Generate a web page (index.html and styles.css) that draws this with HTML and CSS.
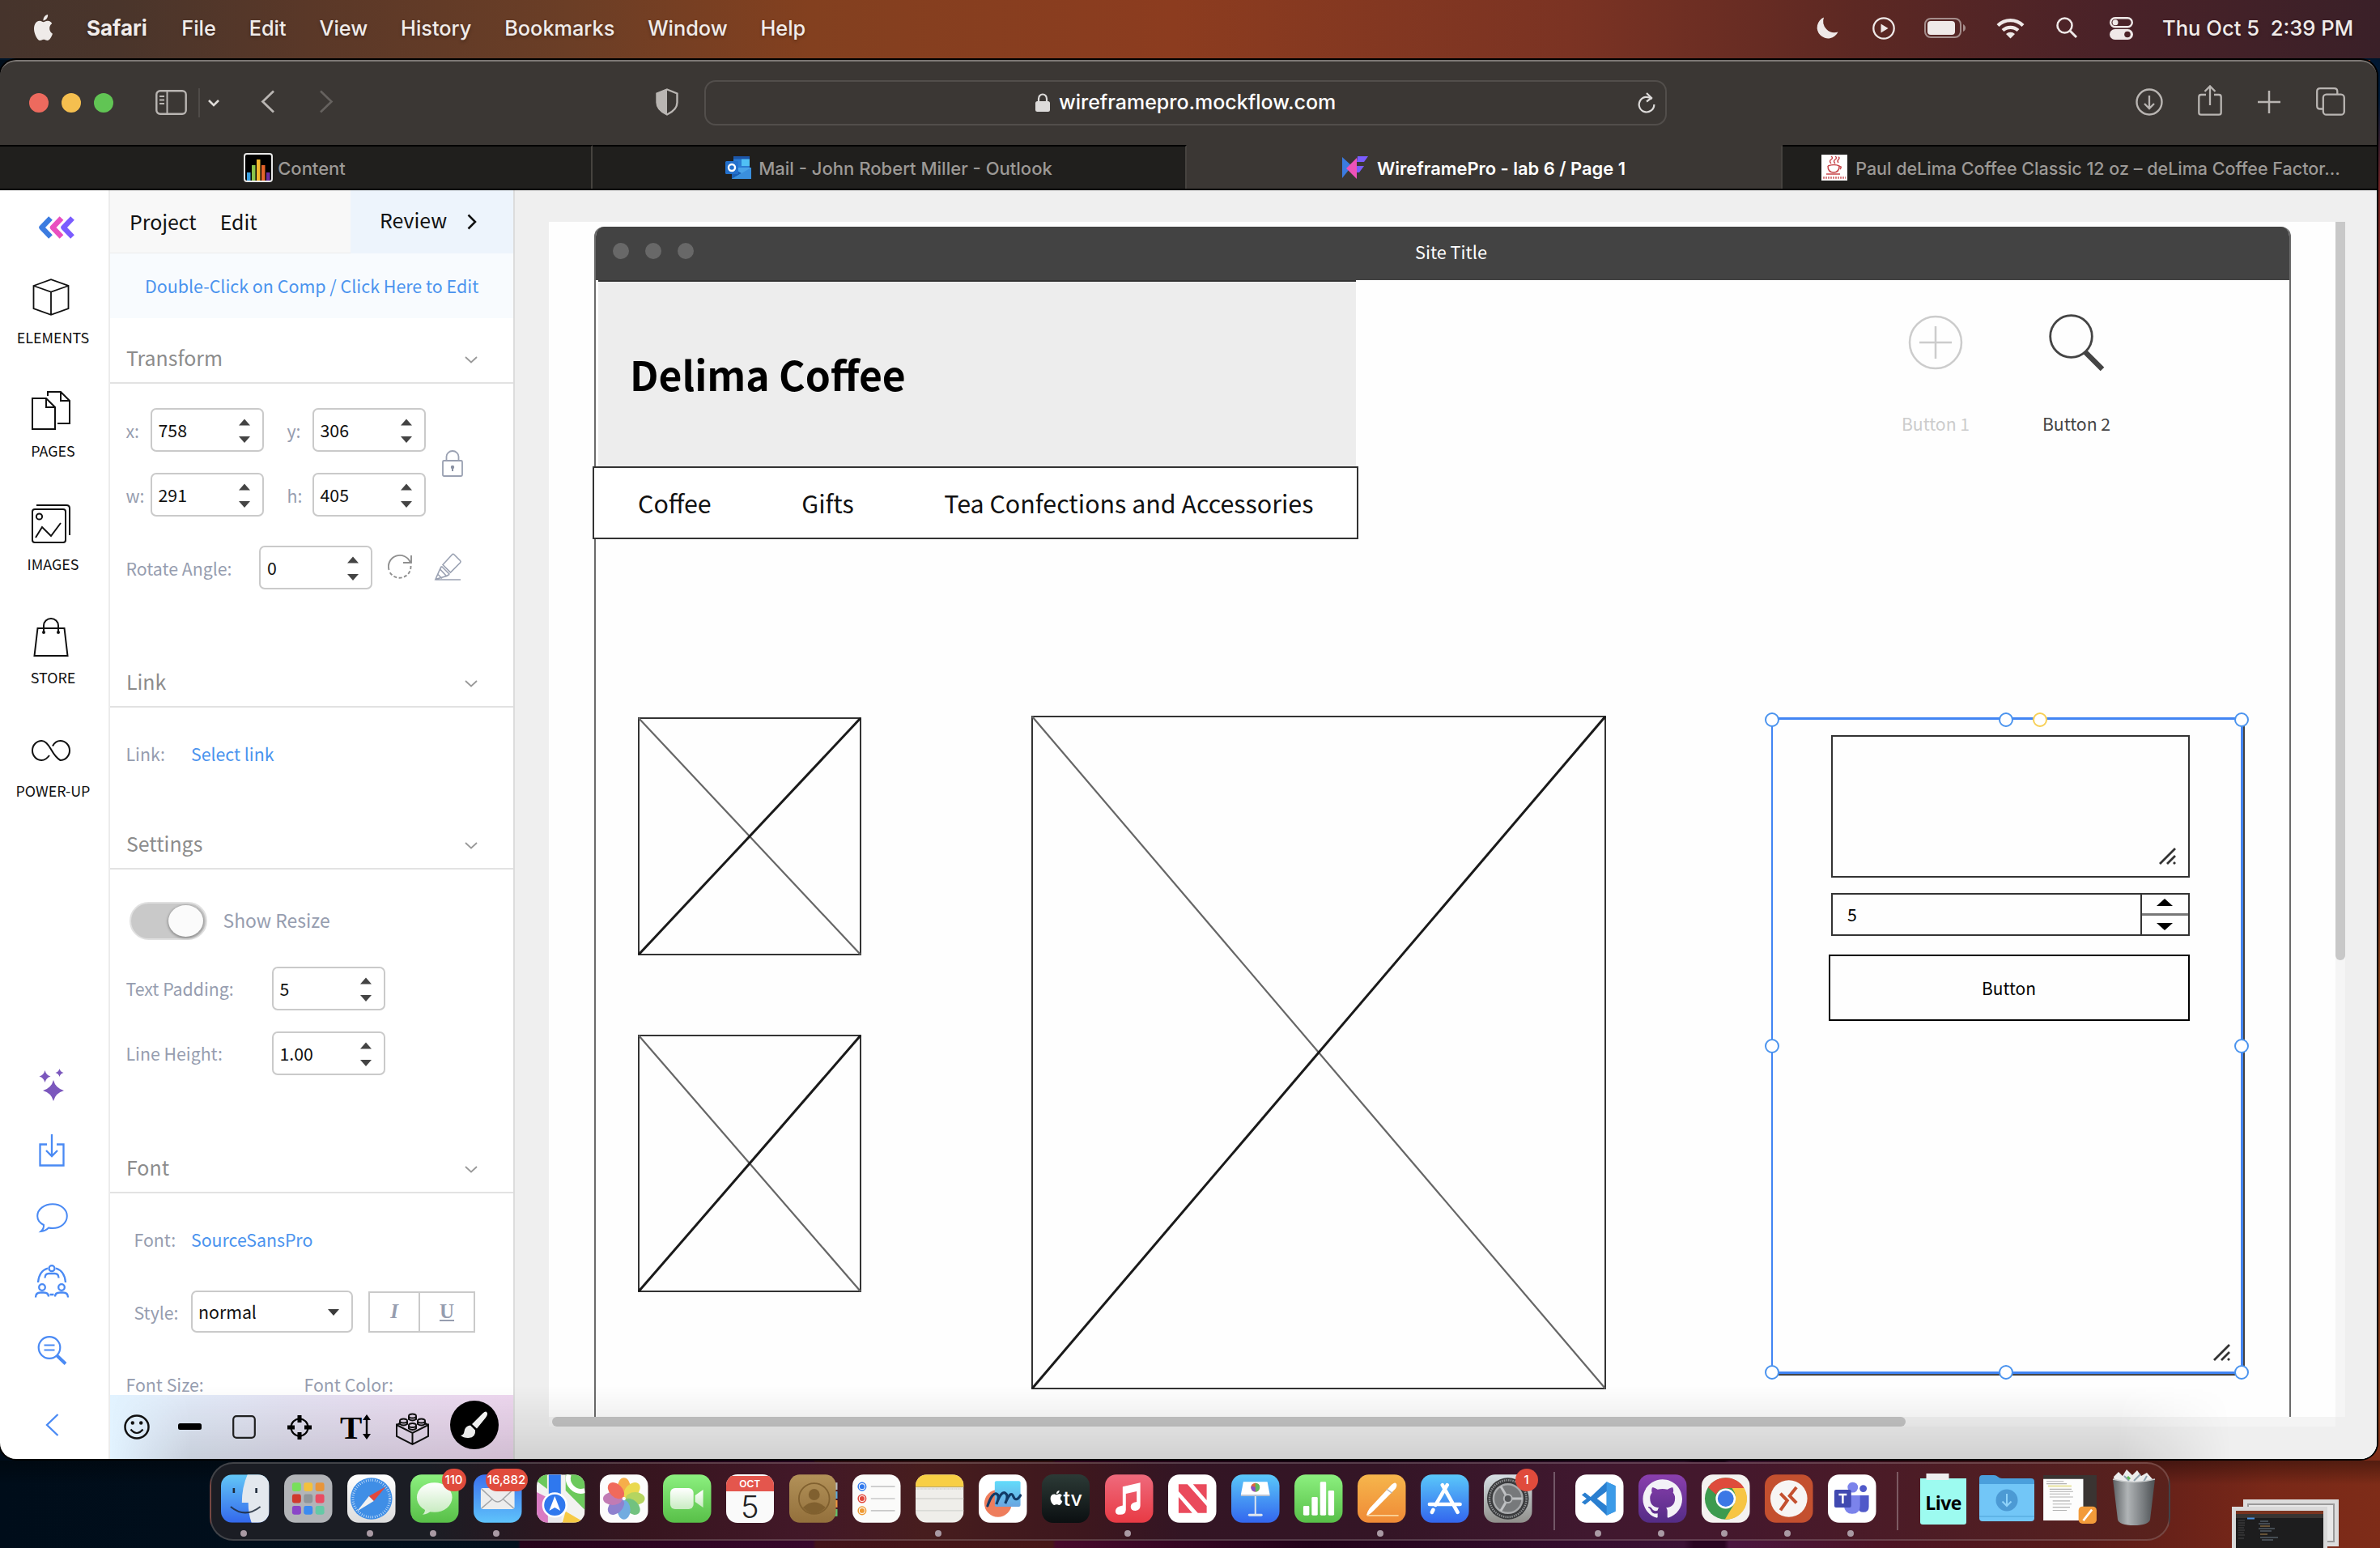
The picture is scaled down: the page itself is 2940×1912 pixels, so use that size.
FILE: index.html
```html
<!DOCTYPE html>
<html lang="en">
<head>
<meta charset="utf-8">
<title>WireframePro - lab 6 / Page 1</title>
<link rel="stylesheet" href="styles.css">
</head>
<body>
<svg class="defs" width="0" height="0">
  <defs>
    <linearGradient id="g-blue" x2="0" y2="1"><stop stop-color="#5ac8fa"/><stop offset="1" stop-color="#3366ee"/></linearGradient>
    <linearGradient id="g-mail" x2="0" y2="1"><stop stop-color="#3a70ee"/><stop offset="1" stop-color="#5fc3fb"/></linearGradient>
    <linearGradient id="g-green" x2="0" y2="1"><stop stop-color="#8cf07f"/><stop offset="1" stop-color="#58bf48"/></linearGradient>
    <linearGradient id="g-music" x2="0" y2="1"><stop stop-color="#ef6a7c"/><stop offset="1" stop-color="#e83a44"/></linearGradient>
    <linearGradient id="g-orange" x2="0" y2="1"><stop stop-color="#f6b64c"/><stop offset="1" stop-color="#ef8a36"/></linearGradient>
    <linearGradient id="g-white" x2="0" y2="1"><stop stop-color="#ffffff"/><stop offset="1" stop-color="#dcdcdc"/></linearGradient>
    <linearGradient id="g-bubble" x2="0" y2="1"><stop stop-color="#ffffff"/><stop offset="1" stop-color="#c9ecc2"/></linearGradient>
    <linearGradient id="g-silver" x2="0" y2="1"><stop stop-color="#d6dfe4"/><stop offset="1" stop-color="#908f8b"/></linearGradient>
    <linearGradient id="g-brown" x2="0" y2="1"><stop stop-color="#b29158"/><stop offset="1" stop-color="#93703c"/></linearGradient>
    <linearGradient id="g-purple" x2="0" y2="1"><stop stop-color="#8a3fae"/><stop offset="1" stop-color="#542c86"/></linearGradient>
    <linearGradient id="g-trash" x2="1" y2="0"><stop stop-color="#5d6164"/><stop offset=".35" stop-color="#b0b4b6"/><stop offset=".7" stop-color="#7c8083"/><stop offset="1" stop-color="#4c5053"/></linearGradient>
    <linearGradient id="g-finder" x2="0" y2="1"><stop stop-color="#63c7f7"/><stop offset="1" stop-color="#3368ec"/></linearGradient>
    <linearGradient id="g-cyan" x2="0" y2="1"><stop stop-color="#62dcfb"/><stop offset="1" stop-color="#6aa5e0"/></linearGradient>
    <clipPath id="sq"><rect width="60" height="60" rx="14"/></clipPath>
    <path id="apple" d="M12.152 6.896c-.948 0-2.415-1.078-3.96-1.04-2.04.027-3.91 1.183-4.961 3.014-2.117 3.675-.546 9.103 1.519 12.09 1.013 1.454 2.208 3.09 3.792 3.039 1.52-.065 2.09-.987 3.935-.987 1.831 0 2.35.987 3.96.948 1.637-.026 2.676-1.48 3.676-2.948 1.156-1.688 1.636-3.325 1.662-3.415-.039-.013-3.182-1.221-3.22-4.857-.026-3.04 2.48-4.494 2.597-4.559-1.429-2.09-3.623-2.324-4.39-2.376-2-.156-3.675 1.09-4.61 1.09zM15.53 3.83c.843-1.012 1.4-2.427 1.245-3.83-1.207.052-2.662.805-3.532 1.818-.78.896-1.454 2.338-1.273 3.714 1.338.104 2.715-.688 3.559-1.701"/>
    <symbol id="caret" viewBox="0 0 16 10"><path d="M1 1l7 6.500 7-6.500" fill="none" stroke="#999" stroke-width="1.800"/></symbol>
    <symbol id="spin" viewBox="0 0 14 30"><path d="M0 8.500L7 .500l7 8zM0 22l7 8 7-8z" fill="#444"/></symbol>
    <symbol id="grip" viewBox="0 0 21 21"><path d="M1 20L20 1M10 20l10-10M18 20l2-2" fill="none" stroke="#333" stroke-width="2.800"/></symbol>
  </defs>
</svg>

<header class="menubar">
  <svg class="apple" width="27" height="32" viewBox="0.5 0 23 24" preserveAspectRatio="none"><use href="#apple" fill="#efebe9"/></svg>
  <nav class="menus">
    <b>Safari</b><span>File</span><span>Edit</span><span>View</span><span>History</span><span>Bookmarks</span><span>Window</span><span>Help</span>
  </nav>
  <div class="status">
    <svg class="s-moon" width="28" height="28" viewBox="0 0 28 28"><path d="M10 .500a13.500 13.500 0 1 0 17.500 18A14 14 0 0 1 10 .500z" fill="#efe9e8"/></svg>
    <svg class="s-play" width="28" height="28" viewBox="0 0 28 28"><circle cx="14" cy="14" r="12.700" fill="none" stroke="#efe9e8" stroke-width="2.300"/><path d="M10.500 8.500v11l9-5.500z" fill="#efe9e8"/></svg>
    <svg class="s-batt" width="51" height="25" viewBox="0 0 51 25"><rect x="1" y="1" width="44" height="23" rx="7" fill="none" stroke="#a58e8c" stroke-width="2"/><rect x="4" y="4" width="34" height="17" rx="4" fill="#efe9e8"/><path d="M48 8q3 1.500 3 4.500t-3 4.500z" fill="#a58e8c"/></svg>
    <svg class="s-wifi" width="35" height="26" viewBox="0 0 35 26"><path d="M2 9.500a22 22 0 0 1 31 0M8 15.500a14 14 0 0 1 19 0" fill="none" stroke="#efe9e8" stroke-width="4.200"/><path d="M12 20a8 8 0 0 1 11 0l-5.500 5.500z" fill="#efe9e8"/></svg>
    <svg class="s-find" width="26" height="27" viewBox="0 0 26 27"><circle cx="10.500" cy="10.500" r="9" fill="none" stroke="#efe9e8" stroke-width="2.500"/><path d="M17 17l8 8" stroke="#efe9e8" stroke-width="3"/></svg>
    <svg class="s-ctl" width="29" height="28" viewBox="0 0 29 28"><rect x="1.200" y="1.200" width="26.600" height="11" rx="5.500" fill="none" stroke="#efe9e8" stroke-width="2.400"/><circle cx="7" cy="6.700" r="3.500" fill="#efe9e8"/><rect y="15" width="29" height="13" rx="6.500" fill="#efe9e8"/><circle cx="22" cy="21.500" r="3.800" fill="#4d2428"/></svg>
    <span class="clock">Thu Oct 5&nbsp; 2:39 PM</span>
  </div>
</header>

<div class="window">
  <div class="toolbar">
    <div class="lights"><i class="red"></i><i class="yellow"></i><i class="green"></i></div>
    <svg class="t-side" width="39" height="31" viewBox="0 0 39 31"><rect x="1.300" y="1.300" width="36.400" height="28.400" rx="4.500" fill="none" stroke="#b9b5b2" stroke-width="2.400"/><path d="M14.500 1v29M5 8h6M5 12.500h6M5 17h6" stroke="#b9b5b2" stroke-width="2"/></svg>
    <i class="t-div"></i>
    <svg class="t-down" width="16" height="10" viewBox="0 0 16 10"><path d="M2 2l6 6 6-6" fill="none" stroke="#dedbd8" stroke-width="2.600"/></svg>
    <svg class="t-back" width="18" height="29" viewBox="0 0 18 29"><path d="M16 1.500L2.500 14.500 16 27.500" fill="none" stroke="#b9b5b2" stroke-width="2.800"/></svg>
    <svg class="t-fwd" width="18" height="29" viewBox="0 0 18 29"><path d="M2 1.500l13.500 13L2 27.500" fill="none" stroke="#66625f" stroke-width="2.600"/></svg>
    <svg class="t-shield" width="28" height="34" viewBox="0 0 28 34"><path d="M14 1.500l12.500 5v11c0 7-5 11.500-12.500 15-7.500-3.500-12.500-8-12.500-15v-11z" fill="none" stroke="#b9b5b2" stroke-width="2.400"/><path d="M14 1v32C6 29 1 24.500 1 17.500V6z" fill="#b9b5b2"/></svg>
    <div class="url">
      <svg width="18" height="23" viewBox="0 0 18 23"><rect y="10" width="18" height="13" rx="2.500" fill="#dddbda"/><path d="M4 11V7a5 5.500 0 0 1 10 0v4" fill="none" stroke="#dddbda" stroke-width="2.200"/></svg>
      <span>wireframepro.mockflow.com</span>
      <svg class="reload" width="22" height="25" viewBox="0 0 22 25"><path d="M17.500 8.500A9.300 9.300 0 1 0 20.300 15" fill="none" stroke="#dddbda" stroke-width="2.200"/><path d="M11 1l6 6-6 4.500" fill="none" stroke="#dddbda" stroke-width="2.200"/></svg>
    </div>
    <svg class="t-dl" width="34" height="34" viewBox="0 0 34 34"><circle cx="17" cy="17" r="15.500" fill="none" stroke="#b9b5b2" stroke-width="2.400"/><path d="M17 9v16M11 19l6 6 6-6" fill="none" stroke="#b9b5b2" stroke-width="2.300"/></svg>
    <svg class="t-share" width="30" height="38" viewBox="0 0 30 38"><path d="M10 12H4q-2.700 0-2.700 2.700V34q0 2.700 2.700 2.700h22q2.700 0 2.700-2.700V14.700Q28.700 12 26 12h-6M15 25V2M8.500 8L15 1.500 21.500 8" fill="none" stroke="#b9b5b2" stroke-width="2.300"/></svg>
    <svg class="t-plus" width="28" height="28" viewBox="0 0 28 28"><path d="M14 0v28M0 14h28" stroke="#b9b5b2" stroke-width="2.500"/></svg>
    <svg class="t-tabs" width="36" height="35" viewBox="0 0 36 35"><path d="M8.500 26.500H5q-3.800 0-3.800-3.800V5Q1.200 1.200 5 1.200h17.500q3.800 0 3.800 3.800v3.500" fill="none" stroke="#b9b5b2" stroke-width="2.300"/><rect x="8.800" y="8.700" width="26" height="25" rx="4" fill="none" stroke="#b9b5b2" stroke-width="2.300"/></svg>
  </div>
  <div class="tabs">
    <div class="tab">
      <svg width="36" height="36" viewBox="0 0 36 36"><rect x="1" y="1" width="34" height="34" rx="3" fill="#000" stroke="#e8e8e8" stroke-width="2"/><path d="M4 24h4.500v10H4z" fill="#3ba0e0"/><path d="M10 15h4.500v19H10z" fill="#8bc34a"/><path d="M16 8h4.500v26H16z" fill="#f5b82e"/><path d="M22 15h4.500v19H22z" fill="#e5652b"/><path d="M28 24h4.500v10H28z" fill="#6b2fa0"/></svg>
      <span>Content</span>
    </div>
    <div class="tab">
      <svg width="32" height="28" viewBox="0 0 32 28"><path d="M10 0h20v14H10z" fill="#2b7cd3"/><path d="M20 3h10v9H20z" fill="#50c0f5"/><path d="M10 0h20v3.500H10z" fill="#1c55a8"/><path d="M8 14h24v14H8z" fill="#4aa3e8"/><path d="M8 14l12 7-12 7z" fill="#1a5fb4"/><path d="M32 14L8 28h24z" fill="#3a8fdc"/><rect y="6" width="16" height="16" rx="1.500" fill="#2370cc"/><circle cx="8" cy="14" r="4" fill="none" stroke="#fff" stroke-width="2.400"/></svg>
      <span>Mail - John Robert Miller - Outlook</span>
    </div>
    <div class="tab active">
      <svg width="32" height="28" viewBox="0 0 32 28"><path d="M0 1l12 11L0 27z" fill="#3b7be0"/><path d="M18 2v26L5 15z" fill="#ee52b8"/><path d="M19 0h13l-5 7h-9zM18 12h9l-6 8h-3z" fill="#7a5cff"/></svg>
      <span>WireframePro - lab 6 / Page 1</span>
    </div>
    <div class="tab last">
      <svg width="32" height="32" viewBox="0 0 32 32"><path d="M0 0h32v32H0z" fill="#fff"/><path d="M12 11q-3-3 0-5t0-4M17 11q-3-3 0-5t0-4M21 10q-2-2 0-4t0-3M8 14q8-3 14 0 0 8-7 8t-7-8M6 24h17M22 15q4-1 1 3" fill="none" stroke="#c8474c" stroke-width="1.500"/><path d="M2 28.500h28" stroke="#d4767a" stroke-width="2.500" stroke-dasharray="2 1"/></svg>
      <span>Paul deLima Coffee Classic 12 oz – deLima Coffee Factor…</span>
    </div>
  </div>

  <div class="app">
    <aside class="rail">
      <svg class="logo" width="45" height="28" viewBox="0 0 45 28"><g fill="none" stroke-width="6.500" stroke-linejoin="round"><path d="M42.500 2.500L31.500 14l11 11.500" stroke="#7a5cff"/><path d="M29 2.500L18 14l11 11.500" stroke="#e94fc0"/><path d="M15.500 2.500L4.500 14l11 11.500" stroke="#3b7be0"/></g></svg>
      <div class="tool"><svg width="46" height="46" viewBox="0 0 46 46"><path d="M1.500 9L23 1.200 44.500 9v28L23 44.800 1.500 37zM1.500 9L23 16.500 44.500 9M23 16.500V44" fill="none" stroke="#111" stroke-width="1.800"/></svg><span>ELEMENTS</span></div>
      <div class="tool"><svg width="48" height="48" viewBox="0 0 48 48"><path d="M1 9h17l11 11v27H1zM18 9v11h11M20 6V1h16l11 11v28H32M36 1v11h11" fill="none" stroke="#111" stroke-width="2"/></svg><span>PAGES</span></div>
      <div class="tool"><svg width="48" height="48" viewBox="0 0 48 48"><rect x="1" y="6" width="41" height="41" rx="3" fill="none" stroke="#111" stroke-width="2"/><path d="M6 1h37q4 0 4 4v33M5 41l8-13 11 11 12-16" fill="none" stroke="#111" stroke-width="2"/><circle cx="9.500" cy="15" r="3.600" fill="none" stroke="#111" stroke-width="2"/></svg><span>IMAGES</span></div>
      <div class="tool"><svg width="44" height="48" viewBox="0 0 44 48"><path d="M5.500 13h33l4 34h-41zM13 18V9.500a9 8.500 0 0 1 18 0V18" fill="none" stroke="#111" stroke-width="2"/><circle cx="13" cy="18" r="2" fill="#111"/><circle cx="31" cy="18" r="2" fill="#111"/></svg><span>STORE</span></div>
      <div class="tool"><svg width="48" height="28" viewBox="0 0 48 28"><path d="M22 20Q17.500 26 12.500 26a11.500 12 0 0 1 0-24Q18 2 24 12.500T35.500 26a11.500 12 0 0 0 0-24Q29.500 2 26 8.500" fill="none" stroke="#111" stroke-width="2"/></svg><span>POWER-UP</span></div>
      <div class="rail-foot">
        <div class="h80"><svg width="32" height="40" viewBox="0 0 32 40"><path d="M18 14q2.500 10 13 13-10.500 3-13 13-2.500-10-13-13 10.500-3 13-13zM7.500 2q1.500 6 7 7.500Q9 11 7.500 17 6 11 .5 9.500 6 8 7.500 2zM25.500 0q1 4 5 5-4 1-5 5-1-4-5-5 4-1 5-5z" fill="#7b57bd"/></svg></div>
        <div class="h82"><svg width="32" height="40" viewBox="0 0 32 40"><path d="M10 12.500H1.500v26h29v-26H22M16 0v26M9 20l7 7 7-7" fill="none" stroke="#4a8af4" stroke-width="2.300"/></svg></div>
        <div class="h84"><svg width="39" height="37" viewBox="0 0 39 37"><path d="M20 1.200c10 0 17.800 6.300 17.800 14.800S30 31 20 31q-3 0-5-.500-4 4-9.500 4.500 4-3.500 3.500-8-7.800-4-7.800-11C1.200 7.500 10 1.200 20 1.200z" fill="none" stroke="#4a8af4" stroke-width="2"/></svg></div>
        <div class="h72"><svg width="42" height="41" viewBox="0 0 42 41"><g fill="none" stroke="#4a8af4" stroke-width="2.300"><circle cx="21" cy="4.700" r="3.500"/><path d="M12.500 16.500q0-5.500 5-5.500h7q5 0 5 5.500M4 22Q5 8 16 4.500M38 22Q37 8 26 4.500"/><circle cx="9" cy="28" r="3.800"/><circle cx="33" cy="28" r="3.800"/><path d="M1 40.500q0-6 6-6h4q6 0 6 5M41 40.500q0-6-6-6h-4q-6 0-6 5M18.500 37h5"/></g></svg></div>
        <div class="h100"><svg width="36" height="36" viewBox="0 0 36 36"><circle cx="15" cy="14.500" r="13.300" fill="none" stroke="#4a8af4" stroke-width="2.200"/><path d="M8.500 11.500h13M8.500 17.500h13" stroke="#4a8af4" stroke-width="2"/><path d="M24 24l11 10.500" stroke="#4a8af4" stroke-width="4"/></svg></div>
        <div class="h84"><svg width="17" height="28" viewBox="0 0 17 28"><path d="M15.500 1L2 14l13.500 13" fill="none" stroke="#4a8af4" stroke-width="2.300"/></svg></div>
      </div>
    </aside>

    <section class="panel">
      <div class="panel-head">
        <span>Project</span><span>Edit</span>
        <div class="review"><span>Review</span><svg width="12" height="20" viewBox="0 0 12 20"><path d="M1.500 1.500L10 10l-8.500 8.500" fill="none" stroke="#111" stroke-width="2.500"/></svg></div>
      </div>
      <div class="banner">Double-Click on Comp / Click Here to Edit</div>
      <div class="panel-scroll">
        <h2>Transform<svg width="16" height="10"><use href="#caret"/></svg></h2>
        <div class="body b335 pad30">
          <div class="xywh">
            <div class="fields">
              <label>x:</label><div class="num">758<svg><use href="#spin"/></svg></div>
              <label>y:</label><div class="num">306<svg><use href="#spin"/></svg></div>
              <label>w:</label><div class="num">291<svg><use href="#spin"/></svg></div>
              <label>h:</label><div class="num">405<svg><use href="#spin"/></svg></div>
            </div>
            <svg width="26" height="33" viewBox="0 0 26 33"><rect x="1" y="13" width="24" height="19" rx="1.500" fill="none" stroke="#9aa1b2" stroke-width="1.800"/><path d="M5.500 13V8a7.500 7 0 0 1 15 0v5" fill="none" stroke="#9aa1b2" stroke-width="1.800"/><circle cx="13" cy="21" r="2.200" fill="#8a91a3"/><path d="M13 21v5" stroke="#8a91a3" stroke-width="2"/></svg>
          </div>
          <div class="row rotate">
            <label>Rotate Angle:</label><div class="num">0<svg><use href="#spin"/></svg></div>
            <svg class="i-rot" width="31" height="31" viewBox="0 0 31 31"><path d="M1.500 18A14 14 0 0 1 28 9M29 0v9h-10" fill="none" stroke="#8f8f8f" stroke-width="1.900"/><path d="M28.500 13A14 14 0 0 1 2 20" fill="none" stroke="#8f8f8f" stroke-width="1.900" stroke-dasharray="4 2.500"/></svg>
            <svg class="i-erase" width="34" height="34" viewBox="0 0 34 34"><path d="M2 33h31M2 32.500L7.500 20l8 8.500zM7.500 20l2-3.500M15.500 28.500l3.500-2M11 14.500L22.500 2q1.200-1.200 2.500 0l7.500 7.500q1.200 1.300 0 2.500L20.500 24zM9.500 16.500l10 10M5 26.500l5 5" fill="none" stroke="#9aa1b2" stroke-width="1.600"/></svg>
          </div>
        </div>
        <h2>Link<svg width="16" height="10"><use href="#caret"/></svg></h2>
        <div class="body b135 pad30">
          <div class="row up1"><label class="w80">Link:</label><a>Select link</a></div>
        </div>
        <h2>Settings<svg width="16" height="10"><use href="#caret"/></svg></h2>
        <div class="body b335">
          <div class="row toggle-row"><div class="toggle"><i></i></div><label class="big">Show Resize</label></div>
          <div class="row r-pad"><label class="w180">Text Padding:</label><div class="num">5<svg><use href="#spin"/></svg></div></div>
          <div class="row r-line"><label class="w180">Line Height:</label><div class="num">1.00<svg><use href="#spin"/></svg></div></div>
        </div>
        <h2>Font<svg width="16" height="10"><use href="#caret"/></svg></h2>
        <div class="body pad30">
          <div class="row in10 up1"><label class="w70">Font:</label><a>SourceSansPro</a></div>
          <div class="row in10 style-row"><label class="w70">Style:</label><div class="select">normal<svg width="14" height="9" viewBox="0 0 14 9"><path d="M0 0h14L7 8z" fill="#3a3a3a"/></svg></div><div class="iu"><em>I</em><u>U</u></div></div>
          <div class="row size-row"><label class="w220">Font Size:</label><label>Font Color:</label></div>
        </div>
      </div>
      <div class="panel-foot">
        <svg width="32" height="31" viewBox="0 0 32 31"><ellipse cx="16" cy="15.500" rx="14.500" ry="14" fill="none" stroke="#111" stroke-width="2.500"/><path d="M8.500 18.500q7.500 9 15 0" fill="none" stroke="#111" stroke-width="2.200"/><circle cx="10.800" cy="10.500" r="2.200" fill="#111"/><circle cx="21.200" cy="10.500" r="2.200" fill="#111"/></svg>
        <svg class="f-min" width="29" height="8" viewBox="0 0 29 8"><rect width="29" height="8" rx="2.500" fill="#000"/></svg>
        <svg class="f-sq" width="29" height="29" viewBox="0 0 29 29"><rect x="1.200" y="1.200" width="26.600" height="26.600" rx="4" fill="none" stroke="#222" stroke-width="2.200"/></svg>
        <svg class="f-tgt" width="32" height="32" viewBox="0 0 32 32"><circle cx="16" cy="16" r="10.500" fill="none" stroke="#000" stroke-width="2.200"/><path d="M16 1v9M16 22v9M1 16h9M22 16h9" stroke="#000" stroke-width="5"/></svg>
        <span class="f-t">T</span><svg class="f-arr" width="10" height="31" viewBox="0 0 10 31"><path d="M5 3v25" stroke="#000" stroke-width="2.400"/><path d="M0 7l5-7 5 7zM0 24l5 7 5-7z"/></svg>
        <svg class="f-brick" width="41" height="40" viewBox="0 0 41 40"><g fill="none" stroke="#111" stroke-width="2"><path d="M1 15v14l19.500 10L40 29V15L20.500 25zM20.500 25v14M1 15l4-2M40 15l-4-2"/><ellipse cx="20.500" cy="4" rx="4.500" ry="2.500"/><path d="M16 4v4q4.500 3 9 0V4"/><ellipse cx="9.500" cy="10" rx="4.500" ry="2.500"/><path d="M5 10v4q4.500 3 9 0v-4"/><ellipse cx="31.500" cy="10" rx="4.500" ry="2.500"/><path d="M27 10v4q4.500 3 9 0v-4"/><ellipse cx="20.500" cy="15.500" rx="4.500" ry="2.500"/><path d="M16 15.500v4q4.500 3 9 0v-4"/></g></svg>
        <div class="brush"><svg width="34" height="34" viewBox="0 0 34 34"><path d="M32 1q2.500 2-1 7L20 21.500l-6-5.500L27 3q4-3.500 5-2zM12 17.500l6 6q1 9-8 9.500-6 .500-10-3 4-.500 4.500-5 1-7 7.500-7.500z" fill="#fff"/></svg></div>
      </div>
    </section>

    <main class="canvas">
      <div class="page">
        <div class="wf-frame">
          <div class="wf-bar"><i></i><i></i><i></i><span>Site Title</span></div>
        </div>
        <div class="wf-hero">Delima Coffee</div>
        <div class="wf-nav"><span>Coffee</span><span>Gifts</span><span>Tea Confections and Accessories</span></div>
        <div class="wf-btn1"><svg width="68" height="68" viewBox="0 0 68 68"><circle cx="34" cy="34" r="32" fill="none" stroke="#ccc" stroke-width="2.500"/><path d="M34 14v40M14 34h40" stroke="#ccc" stroke-width="2.500"/></svg><span>Button 1</span></div>
        <div class="wf-btn2"><svg width="70" height="71" viewBox="0 0 70 71"><circle cx="27.500" cy="27.500" r="25.800" fill="none" stroke="#444" stroke-width="2.800"/><path d="M45 47l21 21" stroke="#444" stroke-width="6.500"/></svg><span>Button 2</span></div>
        <svg class="ph ph1" width="276" height="294"><rect x="1" y="1" width="274" height="292"/><path class="soft" d="M1 1l274 292"/><path class="hard" d="M275 1L1 293"/></svg>
        <svg class="ph ph2" width="276" height="318"><rect x="1" y="1" width="274" height="316"/><path class="soft" d="M1 1l274 316"/><path class="hard" d="M275 1L1 317"/></svg>
        <svg class="ph ph3" width="710" height="832"><rect x="1" y="1" width="708" height="830"/><path class="soft" d="M1 1l708 830"/><path class="hard" d="M709 1L1 831"/></svg>
        <div class="sel">
          <div class="wf-area"><svg width="21" height="21"><use href="#grip"/></svg></div>
          <div class="wf-step"><span>5</span><div><svg width="20" height="9" viewBox="0 0 20 9"><path d="M0 9L10 0l10 9z"/></svg><svg width="20" height="9" viewBox="0 0 20 9"><path d="M0 0l10 9 10-9z"/></svg></div></div>
          <div class="wf-button">Button</div>
          <svg class="sel-grip" width="21" height="21"><use href="#grip"/></svg>
          <i class="hd tl"></i><i class="hd tc"></i><i class="hd rot"></i><i class="hd tr"></i>
          <i class="hd ml"></i><i class="hd mr"></i><i class="hd bl"></i><i class="hd bc"></i><i class="hd br"></i>
        </div>
      </div>
      <div class="vscroll"><i></i></div>
      <div class="hscroll"><i></i></div>
    </main>
  </div>
  <div class="shade"></div>
</div>

<footer class="dock">
  <div class="di on"><svg viewBox="0 0 60 60"><g clip-path="url(#sq)"><path d="M0 0h60v60H0z" fill="url(#g-finder)"/><path d="M33 0q-7 16-7 35h8q0 14 4 25h22V0z" fill="#e3e8ee"/></g><path d="M16 17v6M44 17v6" stroke="#1e2a3a" stroke-width="2.600"/><path d="M12 40q18 15 37 0" fill="none" stroke="#1e2a3a" stroke-width="2" opacity=".85"/></svg></div>
  <div class="di"><svg viewBox="0 0 60 60"><rect width="60" height="60" rx="14" fill="#b2b4b8"/><g><rect x="10" y="10" width="11" height="11" rx="2.500" fill="#78e05a"/><rect x="24.500" y="10" width="11" height="11" rx="2.500" fill="#f3c13c"/><rect x="39" y="10" width="11" height="11" rx="2.500" fill="#e8953a"/><rect x="10" y="24.500" width="11" height="11" rx="2.500" fill="#cf3a2e"/><rect x="24.500" y="24.500" width="11" height="11" rx="2.500" fill="#8f9599"/><rect x="39" y="24.500" width="11" height="11" rx="2.500" fill="#ea4c62"/><rect x="10" y="39" width="11" height="11" rx="2.500" fill="#8a45c8"/><rect x="24.500" y="39" width="11" height="11" rx="2.500" fill="#3d8bf0"/><rect x="39" y="39" width="11" height="11" rx="2.500" fill="#65c9a6"/></g></svg></div>
  <div class="di on"><svg viewBox="0 0 60 60"><rect width="60" height="60" rx="14" fill="url(#g-white)"/><circle cx="30" cy="30" r="26" fill="#3f8ee6"/><circle cx="30" cy="30" r="23" fill="none" stroke="#cfe4fa" stroke-width="3" stroke-dasharray=".8 2"/><path d="M48 15L33 33l-6-6z" fill="#e2483d"/><path d="M12 46l15-19 6 6z" fill="#f1f1f1"/></svg></div>
  <div class="di on"><svg viewBox="0 0 60 60"><rect width="60" height="60" rx="14" fill="url(#g-green)"/><ellipse cx="30" cy="28.500" rx="22" ry="18.500" fill="url(#g-bubble)"/><path d="M18 42q1 5-3 8 7-1 11-5z" fill="#d3eecd"/></svg><b class="badge b3">110</b></div>
  <div class="di on"><svg viewBox="0 0 60 60"><rect width="60" height="60" rx="14" fill="url(#g-mail)"/><rect x="9" y="17" width="42" height="26" rx="2.500" fill="#eceded"/><path d="M10 18l15 14q5 4 10 0l15-14M10 42l14-12M50 42L36 30" fill="none" stroke="#a4a6a8" stroke-width="1.500"/></svg><b class="badge b6">16,882</b></div>
  <div class="di"><svg viewBox="0 0 60 60"><g clip-path="url(#sq)"><path d="M0 0h60v60H0z" fill="#f2f2f0"/><path d="M0 22l16 8v30H0z" fill="#d97bc2"/><path d="M0 0h13v18L0 8zM36 0h24v44L36 20z" fill="#6cc95c"/><path d="M14 0h17v60H14z" fill="#e8e8ec"/><path d="M15 0h15v34H15z" fill="#2f78ee"/><path d="M36 46l24 14H32z" fill="#f6ca45"/><path d="M40 0a16 16 0 0 0 20 20" fill="none" stroke="#fff" stroke-width="6"/></g><circle cx="22.500" cy="38" r="14.500" fill="#2f78ee" stroke="#fff" stroke-width="2.500"/><path d="M22.500 27l7 18-7-4-7 4z" fill="#fff"/></svg></div>
  <div class="di"><svg viewBox="0 0 60 60"><rect width="60" height="60" rx="14" fill="#fcfcfc"/><g opacity=".85"><ellipse cx="30" cy="16" rx="8" ry="12" fill="#f5a12b"/><ellipse cx="30" cy="16" rx="8" ry="12" fill="#e8d332" transform="rotate(45 30 30)"/><ellipse cx="30" cy="16" rx="8" ry="12" fill="#a9cf45" transform="rotate(90 30 30)"/><ellipse cx="30" cy="16" rx="8" ry="12" fill="#5ab96a" transform="rotate(135 30 30)"/><ellipse cx="30" cy="16" rx="8" ry="12" fill="#5a9fdc" transform="rotate(180 30 30)"/><ellipse cx="30" cy="16" rx="8" ry="12" fill="#7b6cc6" transform="rotate(225 30 30)"/><ellipse cx="30" cy="16" rx="8" ry="12" fill="#b765a8" transform="rotate(270 30 30)"/><ellipse cx="30" cy="16" rx="8" ry="12" fill="#ee5140" transform="rotate(315 30 30)"/></g></svg></div>
  <div class="di"><svg viewBox="0 0 60 60"><rect width="60" height="60" rx="14" fill="url(#g-green)"/><rect x="9" y="17" width="29" height="26" rx="6" fill="url(#g-bubble)"/><path d="M40 26l10-7v22l-10-7z" fill="url(#g-bubble)"/></svg></div>
  <div class="di cal"><span>OCT</span><strong>5</strong></div>
  <div class="di"><svg viewBox="0 0 60 60"><path d="M56 10h4v9h-4z" fill="#b9bdc0"/><path d="M56 21h4v9h-4z" fill="#5aa9dc"/><path d="M56 32h4v9h-4z" fill="#ee9640"/><path d="M56 43h4v9h-4z" fill="#62c46c"/><rect width="58" height="60" rx="13" fill="url(#g-brown)"/><circle cx="31" cy="30" r="19" fill="none" stroke="#80602f" stroke-width="1.800"/><circle cx="31" cy="25" r="7" fill="#80602f"/><path d="M17 41q14-13 28 0-14 15-28 0z" fill="#80602f"/></svg></div>
  <div class="di"><svg viewBox="0 0 60 60"><rect width="60" height="60" rx="14" fill="#fbfbfa"/><path d="M23 15h30M23 30h30M23 45h30" stroke="#c9c9c9" stroke-width="1.600"/><g stroke-width="1.500" fill="none"><circle cx="12" cy="15" r="4.800" stroke="#2f78ee"/><circle cx="12" cy="30" r="4.800" stroke="#e2483d"/><circle cx="12" cy="45" r="4.800" stroke="#ef9a33"/></g><circle cx="12" cy="15" r="3" fill="#2f78ee"/><circle cx="12" cy="30" r="3" fill="#e2483d"/><circle cx="12" cy="45" r="3" fill="#ef9a33"/></svg></div>
  <div class="di on"><svg viewBox="0 0 60 60"><g clip-path="url(#sq)"><path d="M0 0h60v60H0z" fill="#efeeea"/><path d="M0 0h60v15H0z" fill="#f8cf45"/><path d="M0 15.500h60" stroke="#b5a15a"/><path d="M0 30h60M0 45h60" stroke="#d4d3cf" stroke-width="1.300"/><path d="M0 18h60" stroke="#c4c3bf" stroke-width="1.500" stroke-dasharray="1 1.500"/></g></svg></div>
  <div class="di"><svg viewBox="0 0 60 60"><rect width="60" height="60" rx="14" fill="#fff"/><circle cx="24" cy="36" r="17" fill="#ee7d5c"/><rect x="20" y="8" width="32" height="32" rx="2" fill="url(#g-cyan)"/><path d="M11 39q6-17 11-15t0 13q6-17 11-14t0 13q7-17 10-9t9-1" fill="none" stroke="#123a66" stroke-width="3.200" stroke-linecap="round"/></svg></div>
  <div class="di tv"><svg width="18" height="22" viewBox="0 0 24 24"><use href="#apple" fill="#fff"/></svg><span>tv</span></div>
  <div class="di on"><svg viewBox="0 0 60 60"><rect width="60" height="60" rx="14" fill="url(#g-music)"/><path d="M22 15l22-5v28.500q0 6-6 6.500-6 0-6-5t7.500-6V21L26 24v20q-.500 6-7 6t-6-5 9-6.500z" fill="#fff"/></svg></div>
  <div class="di"><svg viewBox="0 0 60 60"><rect width="60" height="60" rx="14" fill="#fff"/><path d="M13 12h11l24 27v9H37L13 21z" fill="#ea4a5c"/><path d="M31 12h17v20zM13 28v20h17z" fill="#ea4a5c"/></svg></div>
  <div class="di"><svg viewBox="0 0 60 60"><rect width="60" height="60" rx="14" fill="url(#g-blue)"/><path d="M15 9h30l3 16H12z" fill="#fff"/><path d="M12 25h36v2H12z" fill="#b9c3d2"/><circle cx="30" cy="16" r="5.500" fill="#e0653c"/><path d="M30 16V10.500a5.500 5.500 0 0 1 0 11z" fill="#5db95c"/><path d="M30 16v5.500A5.500 5.500 0 0 1 25 14z" fill="#8453c6"/><path d="M30 27v23" stroke="#dfe6ee" stroke-width="2"/><rect x="21" y="49" width="18" height="3" rx="1.500" fill="#dfe6ee"/></svg></div>
  <div class="di"><svg viewBox="0 0 60 60"><rect width="60" height="60" rx="14" fill="url(#g-green)"/><g fill="#fff"><rect x="11" y="39" width="7.500" height="12" rx="1.500"/><rect x="21.500" y="28" width="7.500" height="23" rx="1.500"/><rect x="32" y="9" width="7.500" height="42" rx="1.500"/><rect x="42" y="20" width="7.500" height="31" rx="1.500"/></g></svg></div>
  <div class="di on"><svg viewBox="0 0 60 60"><rect width="60" height="60" rx="14" fill="url(#g-orange)"/><path d="M48 11q2 2-1 7L20 45q-5 5-9 6 1-5 4-9L41 14q5-5 7-3z" fill="#fff"/><path d="M36 18l7 5" stroke="#bbb" stroke-width="1.500"/><path d="M12 51h39" stroke="#fbd49b" stroke-width="1.800"/></svg></div>
  <div class="di"><svg viewBox="0 0 60 60"><rect width="60" height="60" rx="14" fill="url(#g-blue)"/><path d="M33 13L18.500 38M15.500 44L14 47M27 13l19 34M11 37h38" fill="none" stroke="#fff" stroke-width="4.600" stroke-linecap="round"/></svg></div>
  <div class="di"><svg viewBox="0 0 60 60"><rect width="60" height="60" rx="14" fill="url(#g-silver)"/><circle cx="30" cy="30" r="26" fill="#3a3b3d"/><circle cx="30" cy="30" r="23" fill="none" stroke="#8e9092" stroke-width="2.500" stroke-dasharray="1.500 1.200"/><circle cx="30" cy="30" r="18" fill="#77797b" stroke="#a9abad" stroke-width="2.500"/><path d="M30 30h18M30 30L21 14.500M30 30l-9 15.500" stroke="#c0c2c4" stroke-width="3"/><circle cx="30" cy="30" r="5" fill="#55575a" stroke="#b5b7b9" stroke-width="2"/></svg><b class="badge b1">1</b></div>
  <i class="dsep"></i>
  <div class="di on"><svg viewBox="0 0 60 60"><rect width="60" height="60" rx="14" fill="#fff"/><path d="M39 9l11 5v32l-11 5-20-19-7 5.500-4-3L14 30l-6-4.500 4-3 7 5.500zM39 21L27 30l12 9z" fill="#2a7fd0" fill-rule="evenodd"/><path d="M39 9l11 5v32l-11 5z" fill="#3c9be8"/></svg></div>
  <div class="di on"><svg viewBox="0 0 60 60"><rect width="60" height="60" rx="14" fill="url(#g-purple)"/><g transform="translate(5.500 5.500) scale(2.040)" fill="#f3f2f7"><path d="M12 .297c-6.630 0-12 5.373-12 12 0 5.303 3.438 9.800 8.205 11.385.600.113.820-.258.820-.577 0-.285-.010-1.040-.015-2.040-3.338.724-4.042-1.610-4.042-1.610C4.422 18.070 3.633 17.700 3.633 17.700c-1.087-.744.084-.729.084-.729 1.205.084 1.838 1.236 1.838 1.236 1.070 1.835 2.809 1.305 3.495.998.108-.776.417-1.305.760-1.605-2.665-.300-5.466-1.332-5.466-5.930 0-1.310.465-2.380 1.235-3.220-.135-.303-.540-1.523.105-3.176 0 0 1.005-.322 3.300 1.230.960-.267 1.980-.399 3-.405 1.020.006 2.040.138 3 .405 2.280-1.552 3.285-1.230 3.285-1.230.645 1.653.240 2.873.120 3.176.765.840 1.230 1.910 1.230 3.220 0 4.610-2.805 5.625-5.475 5.920.420.360.810 1.096.810 2.220 0 1.606-.015 2.896-.015 3.286 0 .315.210.690.825.570C20.565 22.092 24 17.592 24 12.297c0-6.627-5.373-12-12-12"/></g></svg></div>
  <div class="di on"><svg viewBox="0 0 60 60"><rect width="60" height="60" rx="14" fill="#f4f2f0"/><circle cx="30" cy="30" r="26" fill="#3d9b4f"/><path d="M30 4a26 26 0 0 1 23 13H30a13 13 0 0 0-12 8L8 16A26 26 0 0 1 30 4z" fill="#de4b3c"/><path d="M53 17a26 26 0 0 1-24 39l12-20q4-9-3-19z" fill="#f7c544"/><circle cx="30" cy="30" r="12.500" fill="#fff"/><circle cx="30" cy="30" r="10" fill="#3c78e6"/></svg></div>
  <div class="di on"><svg viewBox="0 0 60 60"><rect width="60" height="60" rx="14" fill="#c4502f"/><circle cx="30" cy="30" r="23" fill="#f7f5f4"/><path d="M19.500 23.500l8.500 9-8.500 12M39.500 16L31 26.500l8.500 9" fill="none" stroke="#c4502f" stroke-width="4"/></svg></div>
  <div class="di on"><svg viewBox="0 0 60 60"><rect width="60" height="60" rx="14" fill="#fff"/><circle cx="31" cy="16" r="6.500" fill="#7b83eb"/><circle cx="44" cy="17.500" r="4.500" fill="#5059c9"/><path d="M38 26h13v14q0 7-7 7-6 0-6-6z" fill="#5059c9"/><path d="M20 26h20v13q0 10-9.500 10T20 39z" fill="#7b83eb"/><rect x="8" y="19" width="21" height="22" rx="2" fill="#4049b0"/><path d="M13.500 25h10M18.500 25v11" stroke="#fff" stroke-width="2.600"/></svg></div>
  <i class="dsep two"></i>
  <div class="di live"><span>Live</span></div>
  <div class="di"><svg class="wide" viewBox="0 0 68 60"><path d="M0 5q0-4 4-4h14q3 0 5 2t5 2h36q4 0 4 4v10H0z" fill="#4a9fdc"/><path d="M0 12h68v42q0 4-4 4H4q-4 0-4-4z" fill="#72c6f7"/><path d="M0 52h68" stroke="#5aaee2" stroke-width="1.500"/><circle cx="34" cy="32" r="13.500" fill="#4c9ad4"/><path d="M34 24v15M28.500 33.500L34 39l5.500-5.500" fill="none" stroke="#8fd3fa" stroke-width="2"/></svg></div>
  <div class="di"><svg class="wide" viewBox="0 0 68 62"><path d="M0 1h68v56H0z" fill="#3a3432"/><path d="M0 6h51v53H0z" fill="#fdfdfd"/><path d="M4 9h22M4 12h26M8 19h28M8 22h30M8 25h26M8 29h30M12 34h22M12 38h24M12 42h22M12 46h18" stroke="#b2b2b2" stroke-width="1.100"/><path d="M6 15h30" stroke="#e6e29a" stroke-width="2"/><rect x="45" y="41" width="23" height="22" rx="5" fill="#f39b3a"/><path d="M62 45L51 59" stroke="#fff" stroke-width="2.800"/></svg></div>
  <div class="di"><svg class="trash" viewBox="0 0 52 70"><path d="M1 9l6-6 5 5 5-8 7 7 6-6 5 7 7-4 7 8-2 8H3z" fill="#eceded"/><path d="M14 8l6 6M34 6l-8 8M42 8l-4 7" stroke="#8fa3b0" stroke-width="2"/><path d="M18 9l3 3" stroke="#5dbb57" stroke-width="3"/><path d="M0 12q26 7 52 0l-6 50q-2 7-20 7T6 62z" fill="url(#g-trash)"/><path d="M0 12q26 7 52 0" fill="none" stroke="#c9cccd" stroke-width="1.500"/></svg></div>
</footer>

<div class="thumbs">
  <div class="thumb back"><i></i></div>
  <div class="thumb front"><svg width="108" height="46" viewBox="0 0 108 46"><path d="M0 0h108v46H0z" fill="#1d1d1e"/><path d="M0 0h108v4H0z" fill="#7a3420"/><path d="M0 4h108v5H0z" fill="#383432"/><path d="M14 9.500h9" stroke="#4a90e0" stroke-width="2"/><path d="M3 12h8M3 15h8M3 18h8M3 21h7M3 24h8M3 27h7M3 30h8M3 34h7" stroke="#474747"/><path d="M30 13h10M28 16h14M28 22h20M30 25h14M30 33h22M32 36h14" stroke="#6d7a86"/><path d="M30 19h12M30 29h9" stroke="#b08a50"/></svg></div>
</div>
</body>
</html>
```
FILE: styles.css
```css
* { box-sizing: border-box; }
html, body { margin: 0; height: 100%; }
body {
  position: relative;
  width: 2940px; height: 1912px; overflow: hidden;
  display: flex; flex-direction: column;
  font-family: Inter, "Liberation Sans", sans-serif;
  font-weight: 500;
  background:
    linear-gradient(180deg, #001228 0, #001a38 120px, #7b2322 240px, #8a3020 500px, #5f1a20 900px, #8a4018 1200px, #8a3a18 1750px, transparent 1800px) right top / 12px 1800px no-repeat,
    linear-gradient(180deg, rgba(0,0,0,.35), transparent) 0 1804px / 100% 30px no-repeat,
    linear-gradient(90deg, #000d1a 0, #02101d 640px, #26031a 643px, #37082c 1004px, #42131a 1008px, #471818 1300px, #470a2c 1304px, #22031a 1620px, #3c1236 2080px, #2a0522 2092px, #2a0522 2130px, #4a1640 2136px, #4c1424 2330px, #571b1a 2560px, #792818 2800px, #7e2c18 2940px);
}
svg { display: block; flex: none; overflow: visible; }
.defs { position: absolute; }
i { display: block; flex: none; font-style: normal; }

/* menu bar */
.menubar {
  height: 74px; flex: none; padding: 0 33px 5px 40px;
  display: flex; align-items: center;
  color: #f1ecea; font-size: 25.3px; line-height: 40px;
  text-shadow: 0 2px 4px rgba(0,0,0,.3);
  background:
    linear-gradient(90deg, #001428 0, #001a30 666px, #c07a28 668px, #b06420 1100px, #9a4a24 1900px, #5a2030 2200px, #00152c 2300px) 0 72px / 100% 2px no-repeat,
    linear-gradient(90deg, #46342c 0, #4a352b 150px, #5a3828 380px, #6b3e26 700px, #83401f 1000px, #8c3c1f 1450px, #7b3323 1940px, #5c2823 2300px, #4a2228 2600px, #3a2028 2940px);
}
.apple { margin-top: -2px; }
.menus { display: flex; gap: 40.9px; margin-left: 40px; flex: 1; }
.menus b { font-weight: 700; font-size: 26px; margin-right: 1.500px; }
.status { display: flex; align-items: center; }
.s-moon { margin-right: 1px; }
.s-play { margin-left: 41px; }
.s-batt { margin-left: 36px; }
.s-wifi { margin-left: 38px; }
.s-find { margin-left: 39px; }
.s-ctl { margin-left: 40px; }
.clock { margin-left: 36px; font-size: 25.6px; white-space: pre; }

/* browser window */
.window {
  position: relative;
  width: 2936px; height: 1728px; flex: none;
  border-radius: 20px; overflow: hidden;
  display: flex; flex-direction: column;
  background: #3b3734;
  box-shadow: 0 0 0 2px #000;
}
.toolbar {
  height: 105px; flex: none; padding: 0 0 2px 36px;
  display: flex; align-items: center;
  border-top: 2px solid #7c7875; border-radius: 20px 20px 0 0;
}
.lights { display: flex; gap: 16px; margin-top: 1px; }
.lights i { width: 24px; height: 24px; border-radius: 50%; }
.red { background: #ed6a5e; } .yellow { background: #f5bf4f; } .green { background: #61c554; }
.t-side { margin-left: 52px; margin-top: -1px; }
.t-div { width: 2px; height: 36px; margin-left: 14px; background: #4f4b48; }
.t-down { margin-left: 9px; }
.t-back { margin-left: 50px; margin-top: -2px; }
.t-fwd { margin-left: 54px; margin-top: -2px; }
.t-shield { margin-left: 398px; margin-top: -1px; }
.url {
  width: 1189px; height: 56px; margin-left: 32px; margin-top: 0; flex: none;
  border: 2px solid #524e4b; border-radius: 14px;
  display: flex; align-items: center; padding: 0 12px 0 407px;
  color: #fff; font-size: 25px;
}
.url span { margin-left: 11px; flex: 1; padding-bottom: 2px; letter-spacing: -.02px; }
.t-dl { margin-left: 579px; margin-top: -1px; }
.t-share { margin-left: 43px; margin-top: -6px; }
.t-plus { margin-left: 44px; margin-top: -2px; }
.t-tabs { margin-left: 44px; margin-top: -3px; }

.tabs { display: flex; height: 56px; flex: none; border-bottom: 2px solid #000; }
.tab {
  display: flex; align-items: center; justify-content: center;
  width: 734px; flex: none; gap: 8px;
  background: #201f1d; color: #9c9996; font-size: 22px; font-weight: 500;
  border-top: 2px solid #000; border-right: 2px solid #46433f;
  white-space: pre;
}
.tab:first-child { width: 732px; gap: 6px; padding-right: 2px; }
.tab svg { margin-top: -1px; }
.tab span { padding-top: 1px; }
.tab:nth-child(2) { gap: 9px; font-size: 22.05px; }
.tab.active { background: #3b3734; border-top-color: #3b3734; color: #fff; font-weight: 600; font-size: 21.9px; width: 736px; gap: 11px; }
.tab.last { flex: 1; width: auto; border-right: 0; font-size: 21.5px; gap: 10px; padding-left: 3px; }

/* editor */
.app {
  display: flex; height: 1567px; flex: none; background: #fff;
  font-family: "Noto Sans CJK SC", "Noto Sans", sans-serif; font-weight: 400;
}
.rail { width: 136px; flex: none; border-right: 2px solid #ececec; display: flex; flex-direction: column; align-items: center; padding-top: 32px; }
.logo { margin-left: 4px; margin-bottom: 42px; }
.tool { height: 140px; flex: none; display: flex; flex-direction: column; align-items: center; font-size: 17.9px; line-height: 20px; color: #111; }
.tool svg { height: 60px; margin-right: 8px; }
.tool span { margin: 9px 3px 0 0; }
.rail-foot { margin-top: 263px; padding-right: 6px; }
.rail-foot div { display: flex; align-items: center; justify-content: center; }
.h80 { height: 80px; } .h82 { height: 82px; } .h84 { height: 84px; } .h72 { height: 72px; } .h100 { height: 100px; }

.panel { width: 500px; flex: none; border-right: 2px solid #dcdcdc; display: flex; flex-direction: column; }
.panel-head {
  height: 78px; flex: none; display: flex; align-items: center; padding-left: 24px; gap: 29px;
  background: #f8f8f8; border-bottom: 1px solid #ececec; font-size: 24.9px; color: #111;
}
.panel-head span { margin-top: -2px; }
.panel-head .review span { margin: -3px 25px 0 0; }
.review { margin-left: auto; width: 201px; height: 78px; flex: none; background: #edf4fc; display: flex; align-items: center; padding: 0 0 3px 36px; }
.review svg { margin-top: 4px; }
.banner { height: 80px; flex: none; background: #f8fbfe; color: #4a93ee; font-size: 21.45px; line-height: 80px; padding-left: 43px; white-space: nowrap; }
.panel-scroll { flex: 1; min-height: 0; overflow: hidden; padding-top: 16px; font-size: 21.3px; color: #111; }
h2 {
  margin: 0; height: 65px; padding: 0 44px 0 20px; font-size: 24.9px; font-weight: 400; color: #8c8c8c;
  display: flex; align-items: center; justify-content: space-between; border-bottom: 2px solid #e2e2e2;
}
h2 svg { margin-top: 8px; }
.body { padding-left: 19.500px; }
.b335 { height: 335px; } .b135 { height: 135px; }
.pad30 { padding-top: 30px; }
label { color: #969daf; white-space: nowrap; flex: none; }
a { color: #4a93ee; }
.xywh { display: flex; align-items: center; gap: 20px; }
.xywh > svg { margin-top: 2px; }
.fields { display: grid; grid-template-columns: 30px 140px 60px 140px; grid-auto-rows: 54px; row-gap: 26px; align-items: center; }
.fields label:nth-of-type(even) { padding-left: 29px; }
.num {
  width: 140px; height: 54px; flex: none; border: 2px solid #cacaca; border-radius: 7px; background: #fff;
  display: flex; align-items: center; justify-content: space-between; padding: 0 15px 1px 8px;
}
.num svg { width: 14px; height: 30px; margin-top: 2px; }
.row { display: flex; align-items: center; height: 54px; }
.up1 { position: relative; top: -1px; }
.rotate { margin-top: 36px; }
.rotate label { width: 164.500px; padding-top: 1px; }
.i-rot { margin-left: 19px; }
.i-erase { margin-left: 26px; margin-top: -2px; }
.w80 { width: 80.500px; } .w70 { width: 70.500px; } .w180 { width: 180px; } .w220 { width: 220px; }
.toggle-row { height: 128px; padding-bottom: 1px; }
.toggle { width: 96px; height: 47px; margin-left: 4px; border-radius: 24px; background: #c9c9c9; border: 2px solid #e0e0e0; display: flex; justify-content: flex-end; padding: 2px 3px 0 0; }
.toggle i { width: 43px; height: 39px; border-radius: 50%; background: #fbfbfb; box-shadow: 0 1px 3px 1px rgba(0,0,0,.28); }
.big { font-size: 22.9px; margin: -3px 0 0 20px; }
.r-pad { margin-top: -8px; }
.r-line { margin-top: 26px; }
.r-pad label, .r-line label { margin-top: -2px; }
.in10 { padding-left: 10px; }
.style-row { height: 52px; margin-top: 36px; }
.select { width: 200px; height: 52px; border: 2px solid #cacaca; border-radius: 7px; display: flex; align-items: center; justify-content: space-between; padding: 0 15px 2px 7px; }
.select svg { margin-top: 4px; }
.iu { margin-left: 19px; height: 51px; display: flex; border: 2px solid #cacaca; font-family: "Liberation Serif", serif; font-weight: 700; color: #969daf; font-size: 25px; text-align: center; line-height: 45px; }
.iu em { width: 62px; border-right: 2px solid #cacaca; }
.iu u { width: 66px; }
.size-row { height: 24px; margin-top: 52px; line-height: 20px; }
.panel-foot {
  height: 79px; flex: none; display: flex; align-items: center; padding-left: 17px;
  background: linear-gradient(90deg, #e2f3ff, #e6e4f4 45%, #efd8f0);
}
.f-min { margin-left: 35px; margin-top: -2px; }
.f-sq { margin-left: 38px; }
.f-tgt { margin-left: 38px; }
.f-t { font: 700 41px/50px "Liberation Serif", serif; margin-left: 34px; }
.f-arr { margin-left: 1px; }
.f-brick { margin-left: 31px; margin-top: 4px; }
.brush { width: 60px; height: 60px; margin-left: 26px; margin-top: -6px; flex: none; border-radius: 50%; background: #000; display: flex; align-items: center; justify-content: center; }

/* canvas */
.canvas {
  flex: 1; background: #efefef; padding: 39px 0 0 42px;
  display: grid; grid-template: 1476px 12px / 2207px 12px; align-content: start;
}
.page { position: relative; background: #fefefe; overflow: hidden; }
.vscroll { background: #f5f5f5; }
.vscroll i { height: 912px; background: #c8c8c8; border-radius: 0 0 6px 6px; }
.hscroll { background: #f4f4f4; }
.hscroll i { width: 1672px; height: 12px; margin-left: 4px; background: #c5c5c5; border-radius: 6px; }
.wf-frame { position: absolute; left: 56px; top: 6px; width: 2096px; height: 1500px; border: 2px solid #6b6b6b; border-top: 0; border-radius: 12px 12px 0 0; overflow: hidden; }
.wf-bar { position: relative; height: 66px; background: #434343; display: flex; align-items: center; gap: 20px; padding: 0 0 6px 21px; color: #fff; font-size: 21.7px; }
.wf-bar i { width: 20px; height: 20px; border-radius: 50%; background: #686868; }
.wf-bar span { margin-left: 871px; }
.wf-hero { position: absolute; left: 61px; top: 72px; width: 936px; height: 231px; background: #ededed; border-top: 2px solid #333; font-size: 49.8px; font-weight: 700; line-height: 72px; padding: 77px 0 0 39px; color: #000; }
.wf-nav { position: absolute; left: 54px; top: 302px; width: 946px; height: 90px; background: #fff; border: 2px solid #333; display: flex; align-items: center; padding: 0 0 1px 54px; font-size: 30.4px; color: #111; white-space: nowrap; }
.wf-nav span + span { margin-left: 111.500px; }
.wf-btn1, .wf-btn2 { position: absolute; top: 113px; width: 120px; display: flex; flex-direction: column; align-items: center; font-size: 21.2px; line-height: 30px; }
.wf-btn1 { left: 1653px; top: 115px; color: #ccc; }
.wf-btn2 { left: 1827px; color: #444; }
.wf-btn2 svg { margin: 1px -2px 0 0; }
.wf-btn1 span { margin-top: 51px; }
.wf-btn2 span { margin-top: 49px; }
.ph { position: absolute; fill: none; stroke: #333; stroke-width: 2; }
.ph .soft { stroke: #666; stroke-width: 2.200; }
.ph .hard { stroke: #1a1a1a; stroke-width: 3; }
.ph1 { left: 110px; top: 612px; }
.ph2 { left: 110px; top: 1004px; }
.ph3 { left: 596px; top: 610px; }
.sel { position: absolute; left: 1510px; top: 612px; width: 583px; height: 811px; border: 3px solid #4285f4; border-width: 3px 3px 3px 2px; box-shadow: 2px 2px 0 #444; }
.wf-area { position: absolute; left: 72px; top: 19px; width: 443px; height: 176px; border: 2px solid #333; display: flex; align-items: flex-end; justify-content: flex-end; padding: 0 15px 14px 0; }
.wf-step { position: absolute; left: 72px; top: 214px; width: 443px; height: 53px; border: 2px solid #333; display: flex; font-size: 21.2px; }
.wf-step span { flex: 1; padding-left: 18px; line-height: 48px; }
.wf-step div { width: 59px; border-left: 2px solid #333; display: flex; flex-direction: column; justify-content: space-between; align-items: center; padding: 5px 2px 5px 0; background: linear-gradient(#777, #777) 0 23px / 100% 3px no-repeat; }
.wf-button { position: absolute; left: 69px; top: 290px; width: 446px; height: 82px; border: 2px solid #000; display: flex; align-items: center; justify-content: center; font-size: 20.9px; padding-right: 1px; }
.sel-grip { position: absolute; right: 13px; bottom: 13px; }
.hd { position: absolute; width: 18px; height: 18px; border-radius: 50%; background: #fff; border: 2px solid #4a93ee; }
.tl, .tc, .rot, .tr { top: -9px; }
.ml, .mr { top: 394px; }
.bl, .bc, .br { top: 797px; }
.tl, .ml, .bl { left: -10px; }
.tc, .bc { left: 279px; }
.tr, .mr, .br { left: 570px; }
.rot { left: 321px; border-color: #f7cf54; }
.shade { position: absolute; left: 136px; bottom: 0; width: 2620px; height: 90px; background: linear-gradient(180deg, transparent, rgba(0,0,0,.12)); -webkit-mask-image: linear-gradient(90deg, transparent, #000 100px, #000 2480px, transparent); mask-image: linear-gradient(90deg, transparent, #000 100px, #000 2480px, transparent); pointer-events: none; }

/* dock */
.dock {
  position: relative;
  width: 2422px; height: 97px; margin: 4px 0 0 259px; flex: none;
  display: flex; gap: 18.500px; padding: 13px 0 0 11.500px;
  border: 2px solid rgba(255,255,255,.17); border-radius: 29px;
  background: linear-gradient(90deg, #1b1d24 0, #1b1d24 270px, #2a1720 400px, #37151f 540px, #421828 730px, #471d1e 880px, #3d171e 1080px, #331524 1200px, #341526 1450px, #40182f 1700px, #45182c 1900px, #4c1c26 2100px, #5a221c 2422px);
}
.di { position: relative; width: 59.500px; height: 60px; flex: none; display: flex; justify-content: center; }
.di svg { width: 59.500px; height: 60px; }
.di.on::after { content: ""; position: absolute; left: 24.500px; top: 69px; width: 8px; height: 8px; border-radius: 50%; background: #a99aa4; }
.badge { position: absolute; height: 28px; border-radius: 14px; background: #e04b3c; color: #fff; font-weight: 500; font-size: 15px; line-height: 28px; text-align: center; }
.b3 { left: 39px; top: -7px; width: 30px; }
.b6 { left: 15px; top: -7px; width: 52px; }
.b1 { left: 39px; top: -7px; width: 28px; }
.cal { flex-direction: column; background: #fafafa; border-radius: 14px; overflow: hidden; text-align: center; }
.cal span { height: 19px; background: #e4564d; color: #fff; font-size: 12px; font-weight: 600; line-height: 20px; }
.cal strong { font-size: 38px; font-weight: 300; line-height: 38px; color: #222; }
.tv { background: linear-gradient(#2c3a36, #0b0f11); border-radius: 14px; align-items: center; color: #fff; font-size: 25px; font-weight: 500; }
.di.tv svg { width: 18px; height: 22px; margin-top: -3px; }
.dsep { width: 2px; height: 72px; margin: -3px 6.500px 0 8px; background: rgba(255,255,255,.28); }
.dsep.two { margin: -3px 8px 0 7px; }
.live { width: 57px; margin: -1px 1px 0; height: 63px; background: linear-gradient(90deg, transparent 7px, #eee 8px 35px, transparent 36px) 0 0 / 100% 8px no-repeat, linear-gradient(#9dfbf0, #9dfbf0) 0 6px no-repeat; border-radius: 3px; align-items: center; color: #000; font: 700 23px/60px "Open Sans", sans-serif; }
.live span { padding-top: 8px; letter-spacing: -.5px; }
.di svg.wide { width: 68px; height: 60px; margin: 0 -2px 0 0; }
.di svg.trash { width: 52px; height: 70px; margin: -6px -3px 0 0; }

/* minimised window previews */
.thumbs { position: absolute; left: 2757px; top: 1852px; width: 140px; height: 60px; overflow: hidden; }
.thumb { position: absolute; background: #dcdcdc; }
.back { left: 14px; top: 0; width: 118px; height: 58px; padding: 5px; }
.back i { height: 48px; border: 2px solid #9a9a9a; background: #e8e8e8; }
.front { left: 0; top: 9px; width: 118px; height: 60px; padding: 5px; background: #d9d9d9; }
```
